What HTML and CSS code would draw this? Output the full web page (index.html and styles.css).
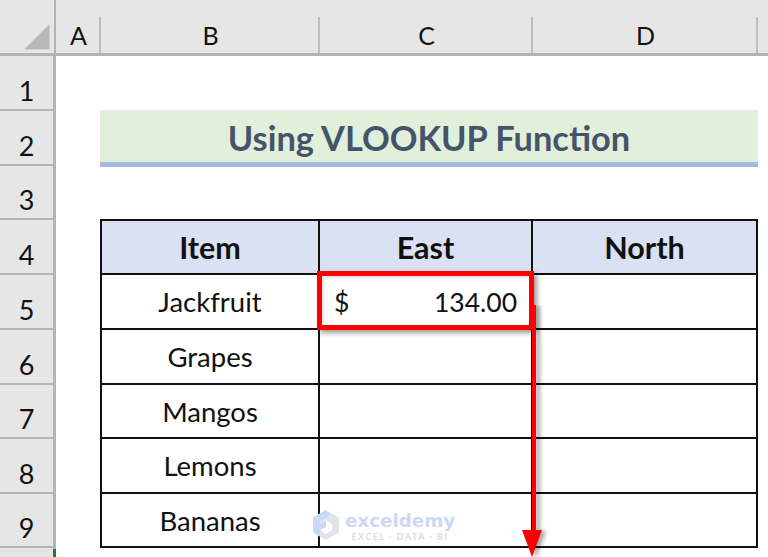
FILE: index.html
```html
<!DOCTYPE html>
<html lang="en">
<head>
<meta charset="utf-8">
<title>Using VLOOKUP Function</title>
<link rel="stylesheet" href="styles.css">
</head>
<body>
<div class="sheet">
  <div class="corner"><svg class="corner-icon" width="56" height="55" viewBox="0 0 56 55"><polygon points="24,49.500 49.500,24 49.500,49.500" fill="#b8b8b8"/></svg></div>
  <div class="ch">A</div><div class="ch">B</div><div class="ch">C</div><div class="ch">D</div><div class="ch ch-end"></div>

  <div class="rh">1</div><div class="blank r1"></div>
  <div class="rh">2</div><div class="blank"></div>
  <div class="title">Using VLOOKUP Function</div><div class="blank"></div>
  <div class="rh">3</div><div class="blank r3"></div>

  <div class="rh">4</div><div class="blank"></div>
  <div class="cell head first top left">Item</div><div class="cell head top">East</div><div class="cell head top">North</div><div class="blank"></div>

  <div class="rh">5</div><div class="blank"></div>
  <div class="cell left">Jackfruit</div><div class="cell acct"><span>$</span><span>134.00</span></div><div class="cell"></div><div class="blank"></div>

  <div class="rh">6</div><div class="blank"></div>
  <div class="cell left">Grapes</div><div class="cell"></div><div class="cell"></div><div class="blank"></div>

  <div class="rh">7</div><div class="blank"></div>
  <div class="cell left">Mangos</div><div class="cell"></div><div class="cell"></div><div class="blank"></div>

  <div class="rh">8</div><div class="blank"></div>
  <div class="cell left">Lemons</div><div class="cell"></div><div class="cell"></div><div class="blank"></div>

  <div class="rh">9</div><div class="blank"></div>
  <div class="cell left">Bananas</div><div class="cell"></div><div class="cell"></div><div class="blank"></div>

  <div class="foot"><i></i></div><div class="blank r-end"></div>
</div>

<div class="redbox"></div>
<svg class="arrow" width="60" height="262" viewBox="0 0 60 262">
  <defs><filter id="sh" x="-50%" y="-10%" width="200%" height="120%"><feGaussianBlur stdDeviation="2"/></filter></defs>
  <g fill="#000" opacity=".35" filter="url(#sh)" transform="translate(4 1)">
    <rect x="21" y="0" width="4" height="230"/><polygon points="11,225 31,225 21,252"/>
  </g>
  <rect x="21" y="0" width="4" height="230" fill="#ff0000"/>
  <polygon points="11,225 31,225 21,252" fill="#ff0000"/>
</svg>

<div class="mark">
  <svg class="mark-logo" width="28" height="32" viewBox="0 0 28 32">
    <polygon points="14,1 27,8.500 27,23.500 14,31 1,23.500 1,8.500" fill="#dfe3ea"/>
    <polygon points="14,1 1,8.500 1,23.500 8,27.500 8,12.500 18,6.500" fill="#c8d8f6"/>
    <polygon points="14,11 20,15 20,21 14,25 8,21 8,15" fill="#fff"/>
    <polygon points="14,11 8,15 8,21 14,18" fill="#c8d8f6"/>
  </svg>
  <div class="mark-text"><b>exceldemy</b><small>EXCEL · DATA · BI</small></div>
</div>
</body>
</html>
```
FILE: styles.css
```css
html, body {
  margin: 0;
  padding: 0;
  background: #fff;
  overflow: hidden;
}
body {
  width: 768px;
  height: 557px;
  position: relative;
  font-family: Lato, "Open Sans", sans-serif;
  color: #111;
}
.sheet {
  display: grid;
  grid-template-columns: 56px 45px 219px 213px 225px 10px;
  grid-template-rows: 56px 55px 55px 54px 55px 55px 55px 54px 55px 54px 9px;
  width: 768px;
  height: 557px;
}
.corner, .ch {
  background: #e6e6e6;
  border-bottom: 3px solid #b4b4b4;
  box-sizing: border-box;
}
.corner {
  border-right: 2px solid #b4b4b4;
  position: relative;
}
.corner-icon {
  display: block;
}
.ch {
  position: relative;
  display: flex;
  align-items: flex-end;
  justify-content: center;
  font-size: 25px;
  line-height: 35px;
}
.ch::after {
  content: "";
  position: absolute;
  right: 0;
  top: 17px;
  bottom: 0;
  width: 2px;
  background: #bdbdbd;
}
.ch-end::after {
  display: none;
}
.rh {
  grid-column: 1;
  background: #e6e6e6;
  border-right: 3px solid #b4b4b4;
  border-bottom: 2px solid #b4b4b4;
  box-sizing: border-box;
  display: flex;
  align-items: flex-end;
  justify-content: center;
  font-size: 27px;
  line-height: 36px;
}
.blank {
  background: #fff;
}
.r1 { grid-column: 2 / 7; }
.r3 { grid-column: 2 / 7; }
.r-end { grid-column: 2 / 7; }
.title {
  grid-column: 3 / 6;
  background: #e2efda;
  border-bottom: 5px solid #a6b9e0;
  box-sizing: border-box;
  position: relative;
  margin: -1px 0 -1px -1px;
  display: flex;
  align-items: center;
  justify-content: center;
  color: #44546a;
  font-size: 34.400px;
  font-weight: 700;
  padding-top: 2px;
}
.cell {
  border-right: 2px solid #111;
  border-bottom: 2px solid #111;
  box-sizing: border-box;
  display: flex;
  align-items: center;
  justify-content: center;
  font-size: 27.500px;
}
.left {
  border-left: 2px solid #111;
  margin-left: -1px;
}
.top {
  border-top: 2px solid #111;
  margin-top: -1px;
}
.head {
  background: #d9e1f2;
  font-weight: 700;
  font-size: 30.500px;
}
.acct {
  justify-content: space-between;
  padding: 0 14px;
  font-size: 26.500px;
}
.foot {
  grid-column: 1;
  background: #e4e4e4;
  border-right: 3px solid #b4b4b4;
  box-sizing: border-box;
  position: relative;
}
.foot i {
  position: absolute;
  right: -3px;
  top: 1px;
  bottom: 0;
  width: 3px;
  background: #217346;
}
.redbox {
  position: absolute;
  left: 317px;
  top: 271px;
  width: 217px;
  height: 59px;
  box-sizing: border-box;
  border: 5px solid #ff0000;
  box-shadow: 3px 3px 5px rgba(0, 0, 0, .4), inset 2px 2px 3px rgba(0, 0, 0, .12);
}
.arrow {
  position: absolute;
  left: 511px;
  top: 305px;
}
.mark {
  position: absolute;
  left: 312px;
  top: 509px;
  display: flex;
  gap: 5px;
  align-items: flex-start;
}
.mark-logo {
  display: block;
}
.mark-text {
  display: flex;
  flex-direction: column;
  align-items: center;
  margin-top: 1.500px;
}
.mark-text b {
  font-family: "DejaVu Sans", sans-serif;
  font-size: 18.300px;
  line-height: 20px;
  font-weight: 700;
  color: #cbd9f7;
}
.mark-text small {
  font-family: Lato, sans-serif;
  font-size: 9px;
  line-height: 10px;
  margin-top: 1.500px;
  font-weight: 700;
  letter-spacing: 1.500px;
  color: #dcdcdc;
}
```
